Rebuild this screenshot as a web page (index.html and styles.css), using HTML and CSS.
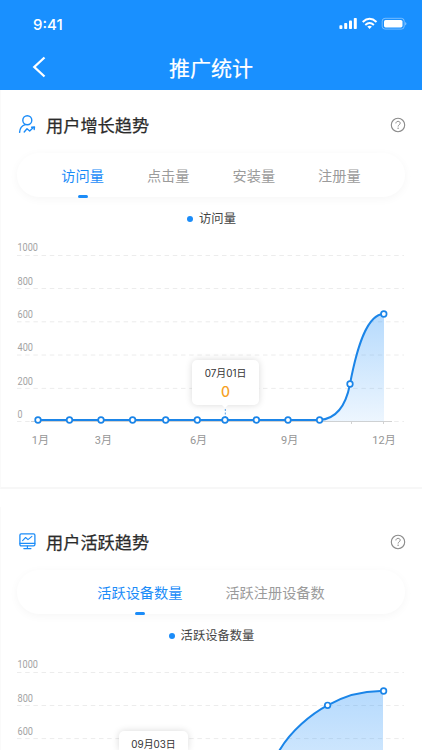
FILE: index.html
```html
<!DOCTYPE html>
<html lang="zh-CN">
<head>
<meta charset="UTF-8">
<meta name="viewport" content="width=device-width, initial-scale=1.0">
<title>推广统计</title>
<link rel="stylesheet" href="styles.css">
</head>
<body>

<header class="header">
    <div class="statusBar">
        <span class="time">9:41</span>
        <svg class="statusIcons" width="69" height="14" viewBox="0 0 69 14">
            <g fill="#fff">
                <rect x="1.4" y="8.2" width="3" height="3.8" rx="0.8"/>
                <rect x="6.2" y="6" width="3" height="6" rx="0.8"/>
                <rect x="11" y="3.6" width="3" height="8.4" rx="0.8"/>
                <rect x="15.8" y="1" width="3" height="11" rx="0.8"/>
                <path d="M31.6 12l-2.3-2.4q2.3-1.8 4.6 0z"/>
                <rect x="46" y="3" width="18.5" height="7.4" rx="1.6"/>
                <path d="M67.2 5v3.4q1.2-.5 1.2-1.7t-1.2-1.7z" opacity="0.5"/>
            </g>
            <g fill="none" stroke="#fff">
                <path d="M24.7 4.9q6.9-6.2 13.8 0M27.3 7.9q4.3-3.7 8.6 0" stroke-width="2"/>
                <rect x="44.2" y="1.3" width="22" height="10.8" rx="2.8" opacity="0.4"/>
            </g>
        </svg>
    </div>
    <div class="navBar">
        <svg class="back" width="16" height="22" viewBox="0 0 16 22">
            <path d="M12.5 1.5L2.3 11l10.2 9.5" fill="none" stroke="#fff" stroke-width="2.3"/>
        </svg>
        <h1>推广统计</h1>
    </div>
</header>

<section class="panel">
    <div class="panelTitle">
        <svg class="titleIcon" width="18" height="20" viewBox="0 0 18 20">
            <g fill="none" stroke="#1b8cf8" stroke-width="1.4" stroke-linecap="round" stroke-linejoin="round">
                <circle cx="9.3" cy="6.2" r="4.5"/>
                <path d="M1.6 18.4c.2-4 2.5-6.8 5.6-7.8M6.2 18l2.8-3.2 2.7 2.2 3.6-3.4M13.6 13.2l2.9-.2-.3 2.5"/>
            </g>
        </svg>
        <h2>用户增长趋势</h2>
        <svg class="help" width="16" height="16" viewBox="0 0 16 16">
            <circle cx="8" cy="8" r="6.7" fill="none" stroke="#8b8b8b" stroke-width="1.1"/>
            <path d="M5.9 6.4c0-2.8 4.3-2.7 4.3-.2 0 1.6-2.1 1.6-2.1 3.3" fill="none" stroke="#8b8b8b"/>
            <circle cx="8.1" cy="11.3" r="0.7" fill="#8b8b8b"/>
        </svg>
    </div>
    <div class="tabs">
        <span class="tab active">访问量</span>
        <span class="tab">点击量</span>
        <span class="tab">安装量</span>
        <span class="tab">注册量</span>
    </div>
    <div class="legend"><i class="dot"></i>访问量</div>
    <div class="chart">
        <svg width="422" height="220" viewBox="0 0 422 220">
            <defs>
                <linearGradient id="fill1" x1="0" y1="0" x2="0" y2="1">
                    <stop offset="0" stop-color="#1b8cf8" stop-opacity="0.32"/>
                    <stop offset="1" stop-color="#1b8cf8" stop-opacity="0.08"/>
                </linearGradient>
            </defs>
            <path class="grid" d="M17 20.5H404M17 53.5H404M17 86.8H404M17 120H404M17 153.4H404M17 186.5H404"/>
            <g class="yLabels">
                <text x="17.5" y="16.3" textLength="20.5" lengthAdjust="spacingAndGlyphs">1000</text>
                <text x="17.5" y="49.5" textLength="15.5" lengthAdjust="spacingAndGlyphs">800</text>
                <text x="17.5" y="82.7" textLength="15.5" lengthAdjust="spacingAndGlyphs">600</text>
                <text x="17.5" y="116.2" textLength="15.5" lengthAdjust="spacingAndGlyphs">400</text>
                <text x="17.5" y="149.8" textLength="15.5" lengthAdjust="spacingAndGlyphs">200</text>
                <text x="17.5" y="183.3" textLength="5" lengthAdjust="spacingAndGlyphs">0</text>
            </g>
            <path class="axis" d="M31 186.5H392M351.5 186.5v2.5M383.5 186.5v2.5"/>
            <path fill="url(#fill1)" d="M319.5 185C336 184 346 170 350 149C357 112 367 79 384 79V186.3H319.5z"/>
            <path class="line" d="M38 185H319.5C336 184 346 170 350 149C357 112 367 79 384 79"/>
            <path class="guide" d="M225.3 174V182"/>
            <g class="points">
                <circle cx="38" cy="185" r="2.8"/>
                <circle cx="69.5" cy="185" r="2.8"/>
                <circle cx="101" cy="185" r="2.8"/>
                <circle cx="132.6" cy="185" r="2.8"/>
                <circle cx="165.7" cy="185" r="2.8"/>
                <circle cx="197.3" cy="185" r="2.8"/>
                <circle cx="225" cy="185" r="2.8"/>
                <circle cx="256.4" cy="185" r="2.8"/>
                <circle cx="288" cy="185" r="2.8"/>
                <circle cx="319.6" cy="185" r="2.8"/>
                <circle cx="350" cy="149" r="2.8"/>
                <circle cx="383.8" cy="79" r="2.8"/>
            </g>
            <g class="xLabels">
                <text x="40.3" y="209.3">1月</text>
                <text x="103.3" y="209.3">3月</text>
                <text x="198.5" y="209.3">6月</text>
                <text x="289.7" y="209.3">9月</text>
                <text x="384" y="209.3">12月</text>
            </g>
        </svg>
        <div class="tooltip tipJuly">
            <span>07月01日</span>
            <b>0</b>
        </div>
    </div>
</section>

<section class="panel">
    <div class="panelTitle">
        <svg class="titleIcon" width="18" height="20" viewBox="0 0 18 20">
            <g fill="none" stroke="#1b8cf8" stroke-width="1.3" stroke-linecap="round" stroke-linejoin="round">
                <rect x="1.9" y="2.9" width="15" height="11.9" rx="1.3"/>
                <path d="M2 12.4H16.8M4.6 9.6l3-3.1 2.4 2.2 3.9-3.4M9.4 15v2.2M5.8 17.6h7.2" stroke-width="1.1"/>
            </g>
        </svg>
        <h2>用户活跃趋势</h2>
        <svg class="help" width="16" height="16" viewBox="0 0 16 16">
            <circle cx="8" cy="8" r="6.7" fill="none" stroke="#8b8b8b" stroke-width="1.1"/>
            <path d="M5.9 6.4c0-2.8 4.3-2.7 4.3-.2 0 1.6-2.1 1.6-2.1 3.3" fill="none" stroke="#8b8b8b"/>
            <circle cx="8.1" cy="11.3" r="0.7" fill="#8b8b8b"/>
        </svg>
    </div>
    <div class="tabs">
        <span class="tab active">活跃设备数量</span>
        <span class="tab">活跃注册设备数</span>
    </div>
    <div class="legend"><i class="dot"></i>活跃设备数量</div>
    <div class="chart">
        <svg width="422" height="98" viewBox="0 0 422 98">
            <defs>
                <linearGradient id="fill2" gradientUnits="userSpaceOnUse" x1="0" y1="39" x2="0" y2="186">
                    <stop offset="0" stop-color="#1b8cf8" stop-opacity="0.32"/>
                    <stop offset="1" stop-color="#1b8cf8" stop-opacity="0.08"/>
                </linearGradient>
            </defs>
            <path class="grid" d="M17 20.5H404M17 53.5H404M17 86.6H404"/>
            <g class="yLabels">
                <text x="17.5" y="16.3" textLength="20.5" lengthAdjust="spacingAndGlyphs">1000</text>
                <text x="17.5" y="49.5" textLength="15.5" lengthAdjust="spacingAndGlyphs">800</text>
                <text x="17.5" y="82.7" textLength="15.5" lengthAdjust="spacingAndGlyphs">600</text>
            </g>
            <path fill="url(#fill2)" d="M225 185C255 185 262 127 280 97.5C291 79 311 62 327.5 53.3C345 43.5 362 38.5 383 39V186.3H225z"/>
            <path class="line" d="M225 185C255 185 262 127 280 97.5C291 79 311 62 327.5 53.3C345 43.5 362 38.5 383 39"/>
            <g class="points">
                <circle cx="327.6" cy="53.3" r="2.8"/>
                <circle cx="383.6" cy="39" r="2.8"/>
            </g>
        </svg>
        <div class="tooltip tipSeptember">
            <span>09月03日</span>
        </div>
    </div>
</section>

</body>
</html>
```
FILE: styles.css
```css
* {
    box-sizing: border-box;
}

body {
    margin: 0;
    height: 750px;
    overflow: hidden;
    background-color: #fff;
    color: #2b2b2b;
    font-family: "Noto Sans CJK SC", sans-serif;
}

.header {
    height: 90px;
    background-color: #1990ff;
    color: #fff;
}

.statusBar {
    height: 45px;
    padding: 15px 15px 0 33px;
    display: flex;
    justify-content: space-between;
    align-items: flex-start;
}

.time {
    font-family: Inter, sans-serif;
    font-size: 15px;
    line-height: 19px;
    font-weight: 500;
}

.statusIcons {
    margin-top: 2px;
}

.navBar {
    height: 44px;
    display: grid;
    grid-template-columns: 62px 1fr 62px;
    align-items: center;
}

.back {
    margin-left: 32px;
}

.navBar h1 {
    margin: 0;
    font-size: 21px;
    line-height: 43px;
    font-weight: 400;
    text-align: center;
    -webkit-text-stroke: 0.2px #fff;
}

.panel {
    height: 399px;
    margin-bottom: 18px;
    padding-top: 18px;
    border-left: 1px solid #fafafa;
    border-bottom: 2px solid #f7f7f7;
}

.panel:last-child {
    height: 243px;
    margin-bottom: 0;
    border-bottom: none;
}

.panelTitle {
    height: 33px;
    padding: 0 16px 0 17px;
    display: flex;
    align-items: center;
}

.panelTitle h2 {
    flex: 1;
    margin: 0 0 0 10px;
    font-size: 17.2px;
    line-height: 32px;
    font-weight: 400;
    -webkit-text-stroke: 0.25px #2b2b2b;
}

.titleIcon {
    margin-top: -1px;
}

.tabs {
    height: 44px;
    margin: 12px 17px 0 16px;
    border-radius: 22px;
    display: flex;
    justify-content: center;
    gap: 43px;
    box-shadow: 0 2px 10px rgba(0, 0, 0, 0.04);
}

.tab {
    font-size: 14.2px;
    line-height: 44px;
    color: #9b9b9b;
}

.tab.active {
    color: #1b8cf8;
}

.tab.active::after {
    content: "";
    display: block;
    width: 10px;
    height: 3px;
    margin: -2px auto 0;
    border-radius: 1.5px;
    background-color: #1b8cf8;
}

.legend {
    height: 38px;
    display: flex;
    align-items: center;
    justify-content: center;
    gap: 6px;
    padding-top: 5px;
    font-size: 12.3px;
    line-height: 33px;
    color: #444;
}

.dot {
    width: 6px;
    height: 6px;
    border-radius: 50%;
    background-color: #1b8cf8;
}

.chart {
    position: relative;
    margin-left: -1px;
    overflow: hidden;
}

.chart svg {
    display: block;
}

.grid {
    fill: none;
    stroke: #ececec;
    stroke-dasharray: 4.5 3.7;
}

.axis {
    fill: none;
    stroke: #d2d2d2;
}

.line {
    fill: none;
    stroke: #1b85e8;
    stroke-width: 2;
}

.guide {
    stroke: #5b9fe3;
    stroke-dasharray: 2 1.5;
}

.points circle {
    fill: #fff;
    stroke: #1b85e8;
    stroke-width: 1.7;
}

.yLabels text {
    font-family: Roboto, sans-serif;
    font-size: 11.3px;
    fill: #a3a3a3;
}

.xLabels text {
    font-family: Roboto, "Noto Sans CJK SC", sans-serif;
    font-size: 11px;
    text-anchor: middle;
    fill: #969696;
}

.tooltip {
    position: absolute;
    width: 67px;
    height: 45px;
    padding-top: 4px;
    border-radius: 5px;
    background-color: #fff;
    box-shadow: 0 0 7px rgba(0, 0, 0, 0.15);
    text-align: center;
    font-family: Inter, "Noto Sans CJK SC", sans-serif;
}

.tooltip::after {
    content: "";
    position: absolute;
    left: 29px;
    top: 44px;
    border: 4px solid transparent;
    border-top-color: #fff;
}

.tooltip span {
    display: block;
    font-size: 9.9px;
    line-height: 18px;
    color: #333;
}

.tooltip b {
    display: block;
    font-size: 14px;
    line-height: 19px;
    font-weight: 500;
    color: #f6a11f;
}

.tipJuly {
    left: 192px;
    top: 125px;
}

.tipSeptember {
    left: 119px;
    top: 79px;
    width: 69px;
    height: 19px;
    padding-top: 7px;
    border-radius: 5px 5px 0 0;
}

.tipSeptember span {
    line-height: 13px;
}

.tipSeptember::after {
    display: none;
}
```
